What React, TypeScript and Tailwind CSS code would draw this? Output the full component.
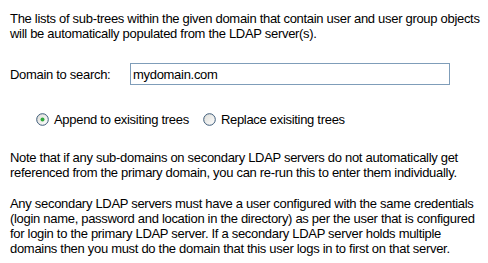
import { useState } from "react";

function Radio({ checked }: { checked: boolean }) {
  return (
    <svg width="13" height="13" viewBox="0 0 13 13" className="shrink-0">
      <defs>
        <linearGradient id={checked ? "rg1" : "rg2"} x1="0" y1="0" x2="1" y2="1">
          <stop offset="0" stopColor="#dcdcd7" />
          <stop offset="1" stopColor="#ffffff" />
        </linearGradient>
      </defs>
      <circle cx="6.5" cy="6.5" r="5.8" fill={`url(#${checked ? "rg1" : "rg2"})`} stroke="#3c5a78" strokeWidth="1" />
      {checked && <circle cx="6.5" cy="6.5" r="2" fill="#2fa83a" />}
    </svg>
  );
}

export default function App() {
  const [domain, setDomain] = useState("mydomain.com");
  const [mode, setMode] = useState("append");

  return (
    <div className="w-[488px] h-[263px] bg-white text-black text-[13px] leading-[15px] tracking-[-0.3px] whitespace-nowrap pl-[10px] pt-[11px] font-['Liberation_Sans',Arial,sans-serif] overflow-hidden">
      <p>
        The lists of sub-trees within the given domain that contain user and user group objects
        <br />
        will be automatically populated from the LDAP server(s).
      </p>

      <div className="flex items-center mt-[22px]">
        <label className="w-[120px]">Domain to search:</label>
        <input
          value={domain}
          onChange={(e) => setDomain(e.target.value)}
          className="w-[320px] h-[22px] border border-[#7f9db9] pl-[2px] outline-none text-[13px] tracking-[-0.3px] font-['Liberation_Sans',Arial,sans-serif]"
        />
      </div>

      <div className="flex items-center mt-[26px] pl-[26px] h-[16px]">
        <span className="flex items-center gap-[5px] cursor-pointer" onClick={() => setMode("append")}>
          <Radio checked={mode === "append"} />
          <span>Append to exisiting trees</span>
        </span>
        <span className="flex items-center gap-[5px] ml-[14px] cursor-pointer" onClick={() => setMode("replace")}>
          <Radio checked={mode === "replace"} />
          <span>Replace exisiting trees</span>
        </span>
      </div>

      <p className="mt-[23px]">
        Note that if any sub-domains on secondary LDAP servers do not automatically get
        <br />
        referenced from the primary domain, you can re-run this to enter them individually.
      </p>

      <p className="mt-[16px]">
        Any secondary LDAP servers must have a user configured with the same credentials
        <br />
        (login name, password and location in the directory) as per the user that is configured
        <br />
        for login to the primary LDAP server. If a secondary LDAP server holds multiple
        <br />
        domains then you must do the domain that this user logs in to first on that server.
      </p>
    </div>
  );
}
